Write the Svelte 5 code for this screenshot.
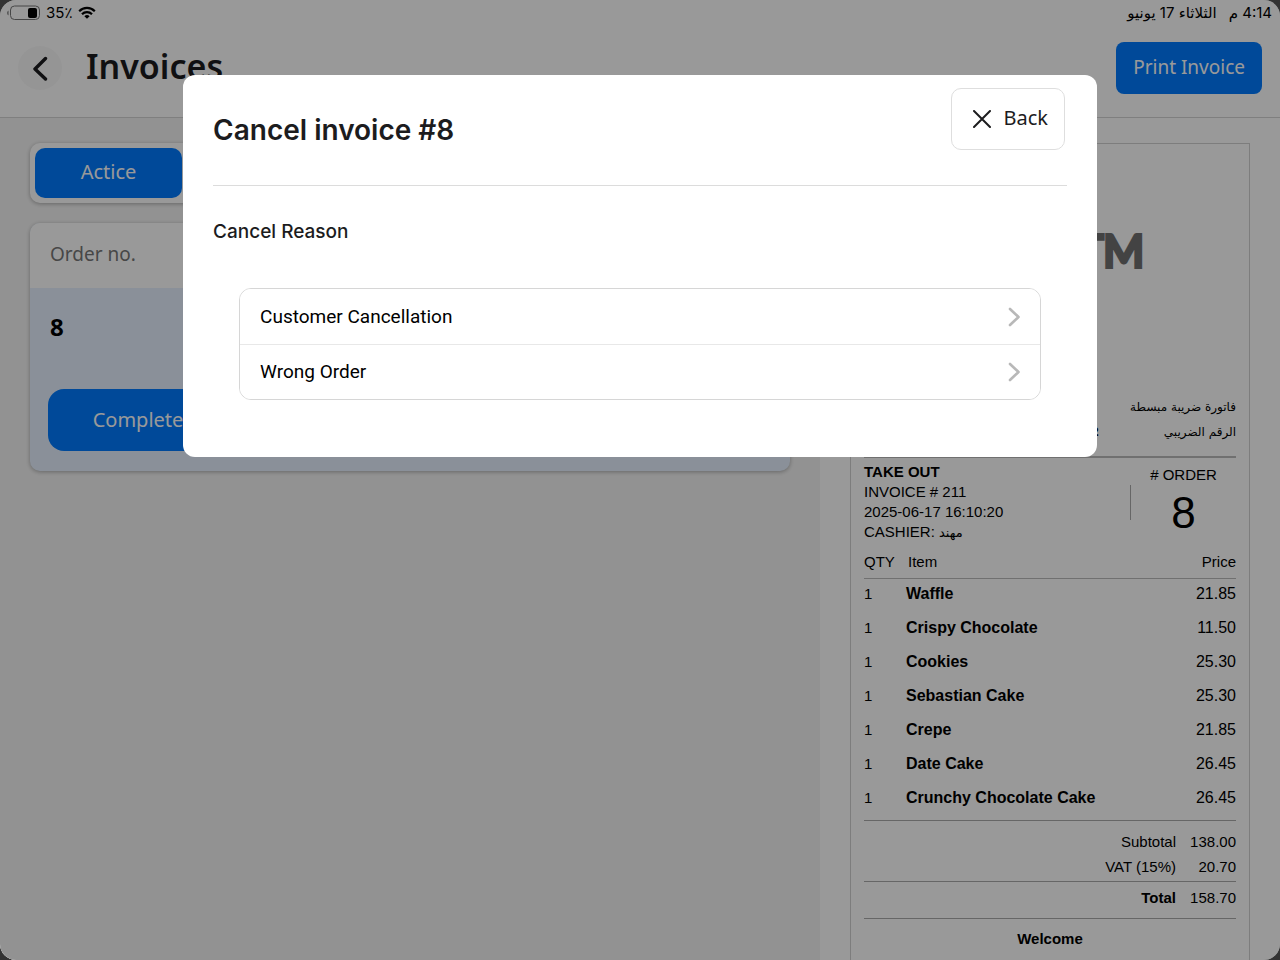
<script>
  const items = [
    ['Waffle', '21.85'],
    ['Crispy Chocolate', '11.50'],
    ['Cookies', '25.30'],
    ['Sebastian Cake', '25.30'],
    ['Crepe', '21.85'],
    ['Date Cake', '26.45'],
    ['Crunchy Chocolate Cake', '26.45'],
  ];
  const reasons = ['Customer Cancellation', 'Wrong Order'];
</script>

<div class="screen">
  <div class="status">
    <div class="device">
      <svg width="34" height="16" viewBox="0 0 34 16" aria-hidden="true">
        <path d="M2.5 5.5a3 3 0 0 0 0 5z" fill="#777" />
        <rect x="4.5" y="1" width="29" height="13.5" rx="4" fill="none" stroke="#777" />
        <rect x="22" y="3" width="9" height="10" rx="2" fill="#000" />
      </svg>
      <span>35٪</span>
      <svg width="18" height="14" viewBox="0 0 18 14" aria-hidden="true" fill="none" stroke="#000" stroke-width="2.2">
        <path d="M1.2 5.2a11 11 0 0 1 15.6 0" />
        <path d="M4 8.3a7 7 0 0 1 10 0" />
        <path d="M9 12.8 6.4 10.2a3.7 3.7 0 0 1 5.2 0z" fill="#000" stroke="none" />
      </svg>
    </div>
    <div class="clock" dir="rtl"><span>4:14 م</span><span>الثلاثاء 17 يونيو</span></div>
  </div>

  <header>
    <button class="round" aria-label="Go back">
      <svg width="16" height="26" viewBox="0 0 16 26" fill="none" stroke="#1c1c1e" stroke-width="3.4" stroke-linecap="round" stroke-linejoin="round">
        <path d="M13.5 3.5 3 14 13.5 24" />
      </svg>
    </button>
    <h1>Invoices</h1>
    <button class="print">Print Invoice</button>
  </header>

  <main>
    <section class="orders">
      <div class="tabs"><button class="tab">Actice</button></div>
      <article class="card">
        <div class="card-head">Order no.</div>
        <div class="card-body">
          <strong>8</strong>
          <button class="complete">Complete</button>
        </div>
      </article>
    </section>

    <section class="preview">
      <div class="receipt">
        <div class="brand">TM</div>
        <div class="legal" dir="rtl">
          <p>فاتورة ضريبة مبسطة</p>
          <p class="tax"><span>الرقم الضريبي</span><b>2</b></p>
        </div>
        <div class="meta">
          <div class="info">
            <b>TAKE OUT</b>
            <span>INVOICE # 211</span>
            <span>2025-06-17 16:10:20</span>
            <span>CASHIER: <bdi class="cashier">مهند</bdi></span>
          </div>
          <i class="bar"></i>
          <div class="number"><span># ORDER</span><span class="big">8</span></div>
        </div>
        <table class="items">
          <thead>
            <tr><th class="qty">QTY</th><th class="name">Item</th><th class="price">Price</th></tr>
          </thead>
          <tbody>
            {#each items as [name, price]}
              <tr><td class="qty">1</td><td class="name">{name}</td><td class="price">{price}</td></tr>
            {/each}
          </tbody>
        </table>
        <dl class="sums">
          <div><dt>Subtotal</dt><dd>138.00</dd></div>
          <div><dt>VAT (15%)</dt><dd>20.70</dd></div>
        </dl>
        <dl class="total">
          <div><dt>Total</dt><dd>158.70</dd></div>
        </dl>
        <p class="welcome">Welcome</p>
      </div>
    </section>
  </main>

  <div class="overlay">
    <div class="modal" role="dialog" aria-modal="true" aria-labelledby="dialog-title">
      <div class="modal-head">
        <h2 id="dialog-title">Cancel invoice #8</h2>
        <button class="back">
          <svg width="18" height="18" viewBox="0 0 18 18" aria-hidden="true" fill="none" stroke="#1c1c1e" stroke-width="2" stroke-linecap="round">
            <path d="M1 1l16 16M17 1 1 17" />
          </svg>
          <span>Back</span>
        </button>
      </div>
      <h3>Cancel Reason</h3>
      <div class="reasons">
        {#each reasons as reason}
          <button>
            <span>{reason}</span>
            <svg width="12" height="20" viewBox="0 0 12 20" aria-hidden="true" fill="none" stroke="#b8b8b8" stroke-width="2.6" stroke-linecap="round" stroke-linejoin="round">
              <path d="M2 2l8.5 8L2 18" />
            </svg>
          </button>
        {/each}
      </div>
    </div>
  </div>
</div>

<style>
  :global(body) { background: #333; }
  .screen, .screen * { box-sizing: border-box; }
  .screen {
    position: relative;
    display: flex;
    flex-direction: column;
    height: 100vh;
    overflow: hidden;
    border-radius: 16px;
    background: #fff;
    color: #000;
    font-family: "Noto Sans", "DejaVu Sans", sans-serif;
  }
  button { font: inherit; border: 0; padding: 0; margin: 0; cursor: pointer; }
  h1, h2, h3, p, dl, dd { margin: 0; }

  .status {
    display: flex;
    justify-content: space-between;
    align-items: center;
    height: 26px;
    padding: 0 8px 0 6px;
    font: 15px/24px Inter, "DejaVu Sans", sans-serif;
  }
  .device { display: flex; align-items: center; gap: 6px; }
  .clock { display: flex; gap: 12px; }

  header {
    display: flex;
    align-items: center;
    height: 92px;
    padding: 0 18px 8px;
    border-bottom: 1px solid #d4d4d4;
  }
  .round {
    display: grid;
    place-items: center;
    width: 44px;
    height: 44px;
    border-radius: 50%;
    background: #f9f9f9;
  }
  h1 {
    flex: 1;
    margin-left: 24px;
    padding-bottom: 4px;
    font-size: 34px;
    line-height: 48px;
    font-weight: 600;
    color: #1c1c1e;
  }
  .print {
    height: 52px;
    padding: 0 17px 2px;
    border-radius: 8px;
    background: #007bff;
    color: #fff;
    font-size: 19px;
  }

  main { flex: 1; display: flex; min-height: 0; }
  .orders { flex: 1; padding: 25px 30px; background: #f4f4f4; }
  .tabs {
    width: 310px;
    padding: 5px;
    border-radius: 10px;
    background: #fff;
    box-shadow: 0 1px 4px rgba(0, 0, 0, 0.3);
  }
  .tab {
    width: 147px;
    height: 50px;
    padding-bottom: 4px;
    border-radius: 10px;
    background: #007bff;
    color: #fff;
    font-size: 20px;
  }
  .card {
    margin-top: 20px;
    border-radius: 10px;
    background: #e6f1ff;
    box-shadow: 0 1px 4px rgba(0, 0, 0, 0.3);
    overflow: hidden;
  }
  .card-head { height: 65px; padding: 0 20px; background: #fff; color: #777; font-size: 19px; line-height: 62px; }
  .card-body { display: flex; flex-direction: column; padding: 23px 18px 20px; }
  .card-body strong { padding-left: 2px; font-size: 24px; line-height: 32px; }
  .complete {
    width: 180px;
    height: 62px;
    margin-top: 46px;
    padding-bottom: 2px;
    border-radius: 16px;
    background: #007bff;
    color: #fff;
    font-size: 20px;
  }

  .preview { flex: 0 0 460px; padding: 25px 30px 0; }
  .receipt {
    height: 100%;
    padding: 0 13px;
    border: 1px solid #d0d0d0;
    border-bottom: 0;
    font: 15px/20px "Liberation Sans", "DejaVu Sans", sans-serif;
  }
  .brand {
    height: 251px;
    padding: 76px 92px 0 0;
    color: #707070;
    font: 400 44px/60px Lato, sans-serif;
    -webkit-text-stroke: 4px #707070;
    stroke-linejoin: round;
    text-align: right;
  }
  .legal { height: 63px; border-bottom: 2px solid #bbb; font: 12px/25px "DejaVu Sans", sans-serif; }
  .tax { display: flex; }
  .tax span { width: 137px; }
  .meta { display: flex; align-items: center; padding-top: 4px; }
  .info { flex: 1; display: flex; flex-direction: column; }
  .cashier { font-size: 13px; }
  .bar { width: 1px; height: 35px; background: #aaa; }
  .number { display: flex; flex-direction: column; align-items: center; width: 105px; }
  .number .big { font-size: 44px; line-height: 56px; }
  .items { width: 100%; margin-top: 7px; border-collapse: collapse; }
  th { height: 28px; padding: 0 0 4px; font-weight: 400; text-align: left; border-bottom: 1px solid #bbb; }
  th.name { padding-left: 2px; }
  td { height: 34px; padding: 0 0 2px; }
  .qty { width: 42px; }
  td.name { font-size: 16px; font-weight: 700; }
  .price { text-align: right; }
  td.price { font-size: 16px; }
  .sums { margin-top: 4px; padding: 8px 0 2px; border-top: 1px solid #aaa; border-bottom: 1px solid #aaa; }
  .sums div, .total div { display: flex; justify-content: flex-end; line-height: 25px; }
  dd { width: 60px; text-align: right; }
  .total { padding: 3px 0 8px; border-bottom: 1px solid #aaa; }
  .total dt { font-weight: 700; }
  .welcome { padding-top: 10px; font-weight: 700; text-align: center; }

  .overlay {
    position: absolute;
    inset: 0;
    display: flex;
    justify-content: center;
    align-items: flex-start;
    padding-top: 75px;
    background: rgba(0, 0, 0, 0.4);
  }
  .modal { width: 71.4%; padding: 0 30px 57px; border-radius: 12px; background: #fff; }
  .modal-head {
    display: flex;
    justify-content: space-between;
    align-items: flex-start;
    height: 111px;
    padding: 13px 2px 0 0;
    border-bottom: 1px solid #dcdcdc;
  }
  h2 { margin-top: 24px; font: 600 28px/36px Inter, sans-serif; color: #1c1c1e; }
  .back {
    display: flex;
    align-items: center;
    gap: 12px;
    height: 62px;
    padding: 0 16px 0 21px;
    border: 1px solid #dedede;
    border-radius: 10px;
    background: #fff;
    color: #1c1c1e;
    font-size: 20px;
  }
  .back span { padding-bottom: 4px; }
  h3 { margin-top: 32px; font: 500 19px/28px Inter, sans-serif; color: #1c1c1e; }
  .reasons { margin: 42px 26px 0; border: 1px solid #d6d6d6; border-radius: 12px; overflow: hidden; }
  .reasons button {
    display: flex;
    justify-content: space-between;
    align-items: center;
    width: 100%;
    height: 55px;
    padding: 0 20px;
    background: #fff;
    color: #000;
    font: 19px/28px Roboto, sans-serif;
  }
  .reasons button + button { border-top: 1px solid #e8e8e8; }
</style>
